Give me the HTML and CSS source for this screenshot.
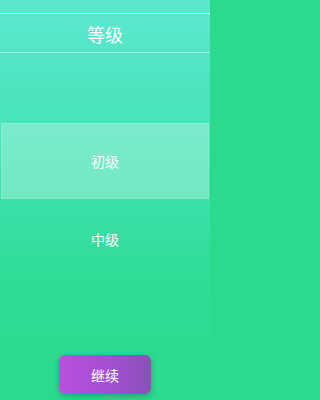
FILE: index.html
```html
<!DOCTYPE html>
<html lang="zh">
<head>
<meta charset="utf-8">
<link rel="stylesheet" href="styles.css">
</head>
<body>
<div class="screen">
  <header class="header">
    <h1 class="title">等级</h1>
  </header>
  <ul class="levels">
    <li class="level selected">初级</li>
    <li class="level">中级</li>
  </ul>
  <div class="footer">
    <button class="continue">继续</button>
  </div>
</div>
</body>
</html>
```
FILE: styles.css
```css
html, body {
  margin: 0;
  padding: 0;
}
body {
  font-family: "Noto Sans CJK SC", "Noto Sans", sans-serif;
  color: #fff;
  background: #2bda8c;
}
.screen {
  width: 210px;
  height: 400px;
  display: flex;
  flex-direction: column;
  background: linear-gradient(180deg, #5ce8cf 0%, #45e3b8 35%, #30dc96 70%, #2bda8c 100%);
  padding-top: 13px;
  box-sizing: border-box;
}
.header {
  height: 38px;
  border-top: 1px solid rgba(255,255,255,0.75);
  border-bottom: 1px solid rgba(255,255,255,0.45);
  display: flex;
  align-items: center;
  justify-content: center;
}
.title {
  margin: 0;
  font-size: 18px;
  font-weight: 400;
  line-height: 1;
  margin-top: 1px;
}
.levels {
  list-style: none;
  margin: 70px 0 0;
  padding: 0;
  flex: 1;
}
.level {
  height: 76px;
  display: flex;
  align-items: center;
  justify-content: center;
  font-size: 14px;
  box-sizing: border-box;
  margin: 0 1px 2px;
}
.level.selected {
  background: rgba(255,255,255,0.28);
  border: 1px solid rgba(255,255,255,0.15);
}
.footer {
  display: flex;
  justify-content: center;
  padding-bottom: 6px;
}
.continue {
  width: 92px;
  height: 39px;
  border: none;
  border-radius: 6px;
  background: linear-gradient(90deg, #bb4fe0 0%, #a04fcf 60%, #8a50b8 100%);
  color: #fff;
  font-family: "Noto Sans CJK SC", "Noto Sans", sans-serif;
  font-size: 14px;
  box-shadow: 0 2px 6px rgba(0,0,0,0.25);
  padding: 0;
}
```
